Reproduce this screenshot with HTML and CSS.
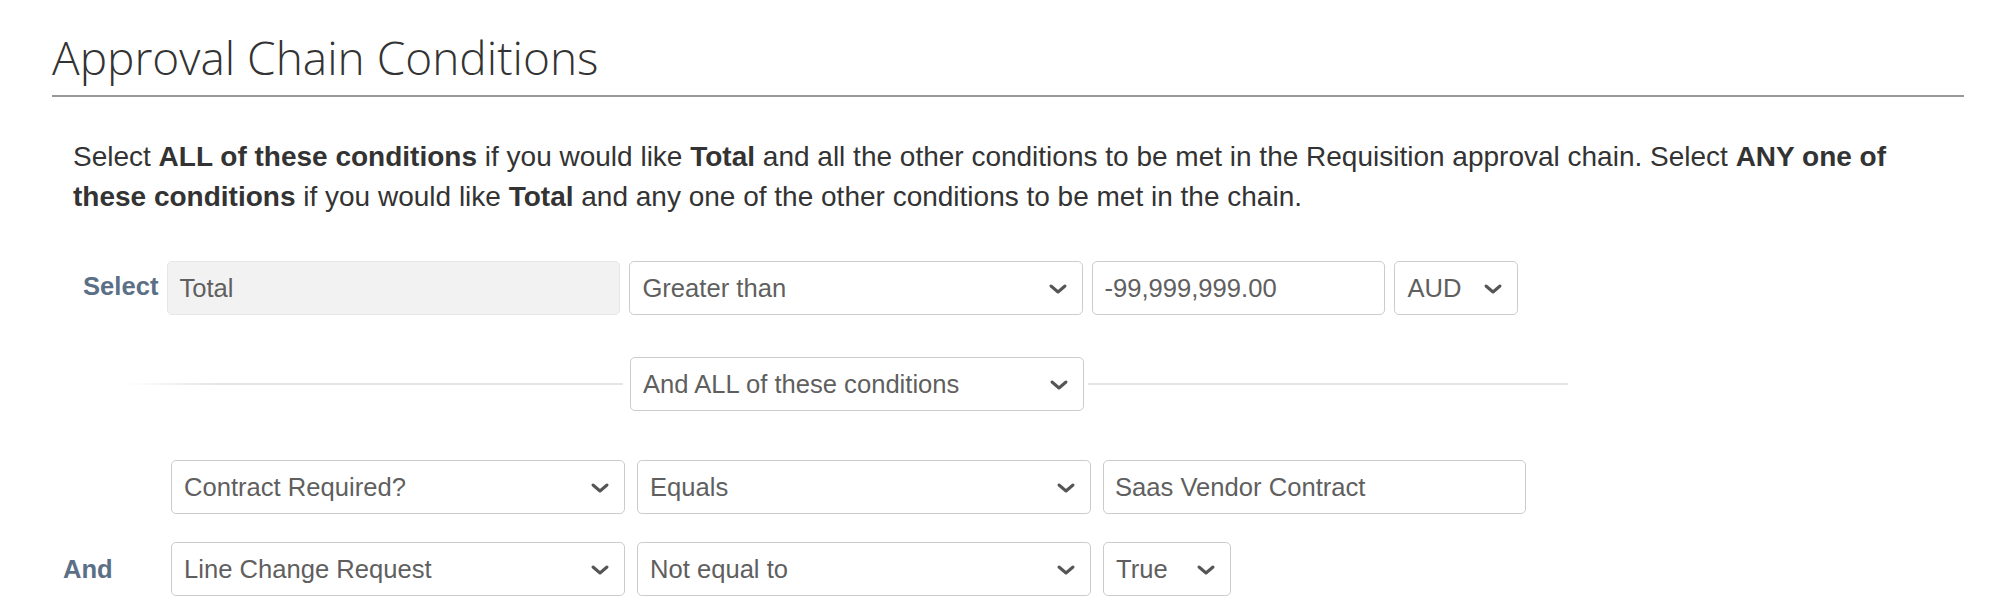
FILE: index.html
```html
<!DOCTYPE html>
<html lang="en">
<head>
	<meta charset="UTF-8">
	<title>Approval Chain Conditions</title>
	<link rel="stylesheet" href="styles.css">
</head>
<body>
	<div class="page">
		<h1 class="title">Approval Chain Conditions</h1>
		<p class="intro">Select <b>ALL of these conditions</b> if you would like <b>Total</b> and all the other conditions to be met in the Requisition approval chain. Select <b>ANY one of these conditions</b> if you would like <b>Total</b> and any one of the other conditions to be met in the chain.</p>

		<div class="row row-main">
			<label class="label">Select</label>
			<input class="field field-total" type="text" value="Total" readonly>
			<div class="select w-op">
				<select><option>Greater than</option></select>
				<svg class="chevron" width="20" height="12" viewBox="0 0 20 12"><polyline points="3,3 10,9 17,3"/></svg>
			</div>
			<input class="field w-amount" type="text" value="-99,999,999.00" readonly>
			<div class="select w-cur">
				<select><option>AUD</option></select>
				<svg class="chevron" width="20" height="12" viewBox="0 0 20 12"><polyline points="3,3 10,9 17,3"/></svg>
			</div>
		</div>

		<div class="row row-join">
			<span class="line line-left"></span>
			<div class="select w-op">
				<select><option>And ALL of these conditions</option></select>
				<svg class="chevron" width="20" height="12" viewBox="0 0 20 12"><polyline points="3,3 10,9 17,3"/></svg>
			</div>
			<span class="line line-right"></span>
		</div>

		<div class="row row-cond first">
			<span class="label label-and"></span>
			<div class="select w-op">
				<select><option>Contract Required?</option></select>
				<svg class="chevron" width="20" height="12" viewBox="0 0 20 12"><polyline points="3,3 10,9 17,3"/></svg>
			</div>
			<div class="select w-op">
				<select><option>Equals</option></select>
				<svg class="chevron" width="20" height="12" viewBox="0 0 20 12"><polyline points="3,3 10,9 17,3"/></svg>
			</div>
			<input class="field w-value" type="text" value="Saas Vendor Contract" readonly>
		</div>

		<div class="row row-cond">
			<span class="label label-and">And</span>
			<div class="select w-op">
				<select><option>Line Change Request</option></select>
				<svg class="chevron" width="20" height="12" viewBox="0 0 20 12"><polyline points="3,3 10,9 17,3"/></svg>
			</div>
			<div class="select w-op">
				<select><option>Not equal to</option></select>
				<svg class="chevron" width="20" height="12" viewBox="0 0 20 12"><polyline points="3,3 10,9 17,3"/></svg>
			</div>
			<div class="select w-bool">
				<select><option>True</option></select>
				<svg class="chevron" width="20" height="12" viewBox="0 0 20 12"><polyline points="3,3 10,9 17,3"/></svg>
			</div>
		</div>
	</div>
</body>
</html>
```

FILE: styles.css
```css
body {
	margin: 0;
	background: #fff;
	font-family: "Liberation Sans", Arial, sans-serif;
	color: #333;
}
.page {
	width: 2006px;
	height: 612px;
	overflow: hidden;
}
.title {
	margin: 29px 42px 0 52px;
	padding-bottom: 10px;
	border-bottom: 2px solid #999;
	font-family: "Open Sans", sans-serif;
	font-weight: 300;
	font-size: 46px;
	line-height: 56px;
	color: #333;
}
.intro {
	margin: 40px 0 0 73px;
	width: 1850px;
	font-size: 28px;
	line-height: 40px;
}
.intro b {
	font-weight: bold;
}

.row {
	display: flex;
	align-items: center;
	height: 54px;
}
.row-main {
	margin-top: 44px;
	padding-left: 83px;
	gap: 9px;
}
.row-join {
	margin-top: 42px;
	padding-left: 125px;
}
.row-cond {
	padding-left: 63px;
	gap: 12px;
	margin-top: 28px;
}
.row-cond.first {
	margin-top: 49px;
}

.label {
	font-size: 25.6px;
	font-weight: bold;
	color: #5b7086;
	margin-bottom: 4px;
}
.label-and {
	width: 96px;
	margin-bottom: 0;
}

.field,
.select select {
	box-sizing: border-box;
	height: 54px;
	margin: 0;
	padding: 0 0 0 11px;
	border: 1px solid #ccc;
	border-radius: 5px;
	background: #fff;
	font-family: "Liberation Sans", Arial, sans-serif;
	font-size: 25.6px;
	color: #5f5f5f;
	outline: none;
}
.field-total {
	width: 453px;
	background: #f2f2f2;
	border-color: #e6e6e6;
}
.w-amount {
	width: 293px;
}
.w-value {
	width: 423px;
}

.select {
	position: relative;
	height: 54px;
}
.select select {
	width: 100%;
	-webkit-appearance: none;
	appearance: none;
	padding-left: 12px;
}
.w-op {
	width: 454px;
}
.w-cur {
	width: 124px;
}
.w-bool {
	width: 128px;
}
.chevron {
	position: absolute;
	right: 15px;
	top: 22px;
	pointer-events: none;
}
.chevron polyline {
	fill: none;
	stroke: #555;
	stroke-width: 3;
	stroke-linecap: round;
	stroke-linejoin: round;
}

.line {
	height: 2px;
	background: #e6e6e6;
}
.line-left {
	width: 498px;
	margin-right: 7px;
	background: linear-gradient(to right, rgba(230, 230, 230, 0), #e6e6e6 90px);
}
.line-right {
	width: 480px;
	margin-left: 4px;
}
```
